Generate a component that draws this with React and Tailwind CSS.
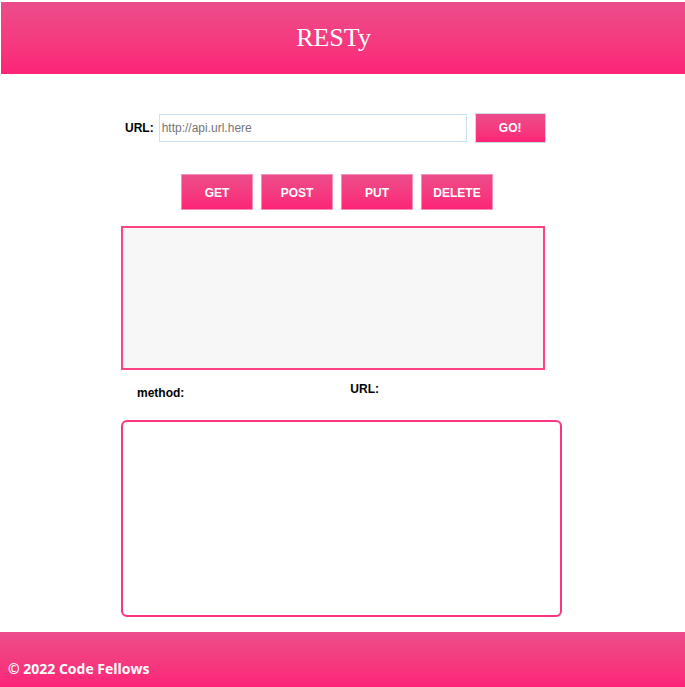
export default function App() {
  const methods = ['GET', 'POST', 'PUT', 'DELETE'];

  return (
    <div className="min-h-screen bg-white pt-[2px] font-['Liberation_Sans',Arial,sans-serif]">
      <header className="ml-[1px] h-[72px] flex items-center justify-center bg-gradient-to-b from-[#eb4c8a] to-[#fd2277]">
        <h1 className="text-[26px] text-white font-['Liberation_Serif',serif] leading-none pr-[19px]">RESTy</h1>
      </header>

      <main className="h-[558px] pt-[39px]">
        {/* url form */}
        <form className="ml-[125px] flex items-center h-[30px]">
          <label className="text-[12px] font-bold text-black mr-[5px]">URL:</label>
          <input
            type="text"
            placeholder="http://api.url.here"
            className="w-[308px] h-[28px] border border-[#cfe2f3] px-[2px] text-[12px] placeholder:text-[#757575] outline-none"
          />
          <button
            type="button"
            className="ml-[8px] w-[71px] h-[30px] border border-[#c7dbee] bg-gradient-to-b from-[#eb4c8a] to-[#fd2277] text-white text-[12px] font-bold"
          >
            GO!
          </button>
        </form>

        <div className="ml-[181px] mt-[31px] flex gap-[8px]">
          {methods.map((m) => (
            <button
              key={m}
              type="button"
              className="w-[72px] h-[36px] pt-[1px] border border-[#f58fb5] bg-gradient-to-b from-[#eb4c8a] to-[#fd2277] text-white text-[12px] font-bold"
            >
              {m}
            </button>
          ))}
        </div>

        <textarea className="block ml-[121px] mt-[16px] w-[424px] h-[144px] border-2 border-[#fd4286] bg-[#f8f7f7] resize-none outline-none" />

        <div className="flex items-start h-[50px] text-[12px] font-bold text-black">
          <span className="ml-[137px] mt-[14px]">method:</span>
          <span className="ml-[166px] mt-[10px]">URL:</span>
        </div>

        <section className="ml-[121px] w-[441px] h-[197px] border-2 border-[#fd3480] rounded-[6px] bg-white" />
      </main>

      <footer className="h-[55px] bg-gradient-to-b from-[#eb4c8a] to-[#fd2277] pl-[8px] pt-[28px]">
        <p className="text-white text-[14px] font-bold leading-[18px] font-['Open_Sans',sans-serif]">© 2022 Code Fellows</p>
      </footer>
    </div>
  );
}
